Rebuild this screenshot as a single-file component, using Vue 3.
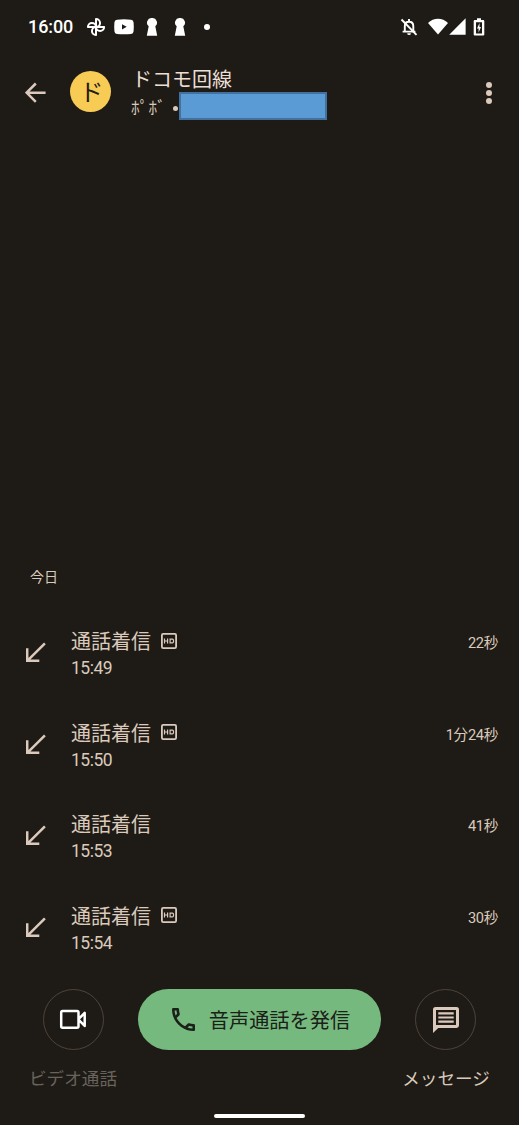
<script setup>
const calls = [
  { time: '15:49', duration: '22秒', hd: true },
  { time: '15:50', duration: '1分24秒', hd: true },
  { time: '15:53', duration: '41秒', hd: false },
  { time: '15:54', duration: '30秒', hd: true },
]
</script>

<template>
  <div class="screen">
    <div class="status">
      <span class="clock">16:00</span>
      <svg class="pinwheel" width="20" height="20" viewBox="0 0 20 20">
        <path d="M10 10V1.9A4 4 0 0 1 10 10H18.1A4 4 0 0 1 10 10V18.1A4 4 0 0 1 10 10H1.9A4 4 0 0 1 10 10Z" />
      </svg>
      <svg class="video-app" width="20" height="16" viewBox="0 0 20 16">
        <path d="M3 .7Q10 0 17 .7Q19.4.9 19.6 3.5Q20 8 19.6 12.2Q19.4 14.8 17 15Q10 15.7 3 15Q.6 14.8.4 12.2Q0 8 .4 3.5Q.6.9 3 .7ZM8 5.2v5.2l4.7-2.6z" fill-rule="evenodd" />
      </svg>
      <svg v-for="n in 2" :key="n" class="keyhole" width="12" height="18" viewBox="0 0 12 18">
        <path d="M6 0a4.7 4.7 0 0 1 3.3 8.3L11.2 17.7H.8L2.7 8.3A4.7 4.7 0 0 1 6 0Z" />
      </svg>
      <i class="more-dot"></i>
      <span class="grow"></span>
      <svg class="bell" width="18" height="18" viewBox="0 0 18 18">
        <g fill="none" stroke="currentColor" stroke-width="1.9">
          <path d="M4.8 13.2V8.2C4.8 5.4 6.5 3.7 9 3.7S13.3 5.4 13.3 8.2v5M2.6 13.6h12.8M9 1v3" />
          <path d="M1.5 1.5L16.5 16.8" />
        </g>
        <path d="M7.2 15.2h3.7a1.85 1.85 0 0 1-3.7 0Z" />
      </svg>
      <svg class="wifi" width="20" height="17" viewBox="0 0 20 17">
        <path d="M0 5C5.5-.8 14.5-.8 20 5L10 16.6Z" />
      </svg>
      <svg class="signal" width="17" height="17" viewBox="0 0 17 17"><path d="M16.6.2V16.7H.2Z" /></svg>
      <svg class="battery" width="12" height="18" viewBox="0 0 12 18">
        <path d="M4 .3h4v1.8h2.2q1.1 0 1.1 1.1v13.2q0 1.1-1.1 1.1H1.8q-1.1 0-1.1-1.1V3.2q0-1.1 1.1-1.1H4ZM3 4.2v11.2h6V4.2Z" fill-rule="evenodd" />
        <path d="M6.5 5L4 10.5h1.6v4L8 9H6.5Z" />
      </svg>
    </div>

    <header class="bar">
      <svg class="back" width="22" height="22" viewBox="0 0 22 22">
        <path d="M20.6 10.7H2.2M10.8 1.5L1.6 10.7l9.2 9.2" />
      </svg>
      <div class="avatar">ド</div>
      <div class="contact">
        <div class="name">ドコモ回線</div>
        <div class="number"><span class="carrier">ﾎﾟﾎﾞ</span><i class="bullet"></i><span class="mask"></span></div>
      </div>
      <div class="menu"><i></i><i></i><i></i></div>
    </header>

    <main class="history">
      <h2>今日</h2>
      <div v-for="call in calls" :key="call.time" class="call">
        <svg class="incoming" width="21" height="21" viewBox="0 0 21 21">
          <path d="M18.9 1.3L1.8 18.4M1.2 6.3V18.8H13.3" />
        </svg>
        <div class="detail">
          <div class="kind">
            <span>通話着信</span>
            <svg v-if="call.hd" width="16" height="16" viewBox="0 0 16 16">
              <rect x=".9" y=".9" width="14.2" height="14.2" rx="1.3" stroke-width="1.8" />
              <path d="M3.5 5.6v4.8M6.6 5.6v4.8M3.5 8h3.1M9.1 6.1h2.2q1.2 0 1.2 1.2v1.4q0 1.2-1.2 1.2H9.1Z" stroke-width="1.2" />
            </svg>
          </div>
          <div class="time">{{ call.time }}</div>
        </div>
        <div class="duration">{{ call.duration }}</div>
      </div>
    </main>

    <footer class="actions">
      <div class="action disabled">
        <span class="ring">
          <svg width="28" height="22" viewBox="0 0 28 22">
            <path class="line" d="M3.6 2H18Q19.5 2 19.5 3.5V17.3Q19.5 18.8 18 18.8H3.6Q2.2 18.8 2.2 17.3V3.5Q2.2 2 3.6 2ZM20 9.7L25.7 3.9V16.9L20 11.1" />
          </svg>
        </span>
        <span class="label">ビデオ通話</span>
      </div>
      <div class="voice">
        <svg width="23" height="23" viewBox="3 3 18 18">
          <path d="M6.54 5c.06.89.21 1.76.45 2.59l-1.2 1.2c-.41-1.2-.67-2.47-.76-3.79h1.51m9.86 12.02c.85.24 1.72.39 2.6.45v1.49c-1.32-.09-2.59-.35-3.8-.75l1.2-1.19M7.5 3H4c-.55 0-1 .45-1 1 0 9.39 7.61 17 17 17 .55 0 1-.45 1-1v-3.49c0-.55-.45-1-1-1-1.24 0-2.45-.2-3.57-.57-.1-.04-.21-.05-.31-.05-.26 0-.51.1-.71.29l-2.2 2.2c-2.83-1.45-5.15-3.76-6.59-6.59l2.2-2.2c.28-.28.36-.67.25-1.02C8.7 6.45 8.5 5.25 8.5 4c0-.55-.45-1-1-1z" />
        </svg>
        <span>音声通話を発信</span>
      </div>
      <div class="action">
        <span class="ring">
          <svg width="26" height="26" viewBox="0 0 26 26">
            <path d="M2.5 0H23.5Q26 0 26 2.5V18.6Q26 21 23.5 21H5.3L0 26V2.5Q0 0 2.5 0ZM3 3V18H23V3Z" fill-rule="evenodd" />
            <path d="M5.3 5.2h15.4v2.2H5.3ZM5.3 9.4h15.4v2.2H5.3ZM5.3 13.6h15.4v2.2H5.3Z" />
          </svg>
        </span>
        <span class="label">メッセージ</span>
      </div>
    </footer>
    <div class="home"></div>
  </div>
</template>

<style>
body { background: #1e1b16; }
</style>

<style scoped>
.screen {
  width: 519px;
  height: 1125px;
  display: flex;
  flex-direction: column;
  overflow: hidden;
  background: #1e1b16;
  color: #dbcabb;
  font-family: "Noto Sans CJK JP", sans-serif;
}
svg { display: block; flex: none; fill: currentColor; }
i { display: block; border-radius: 50%; background: currentColor; }

.status {
  height: 53px;
  box-sizing: border-box;
  display: flex;
  align-items: center;
  padding: 0 34px 0 28px;
  color: #fff;
}
.clock { width: 58px; font: 500 18px/24px Roboto, sans-serif; letter-spacing: -0.1px; }
.pinwheel { fill: none; stroke: currentColor; stroke-width: 2; stroke-linejoin: round; }
.video-app { margin-left: 8px; }
.keyhole { margin-left: 12px; }
.keyhole + .keyhole { margin-left: 16px; }
.more-dot { width: 6px; height: 6px; margin-left: 18px; }
.grow { flex: 1; }
.bell { margin-right: 10px; }
.signal { margin: 0 7px 0 1px; }

.bar { height: 83px; display: flex; align-items: flex-start; }
.back { margin: 29px 0 0 25px; fill: none; stroke: #dbc9bc; stroke-width: 2.5; }
.avatar {
  width: 41px;
  height: 41px;
  margin: 18px 0 0 23px;
  border-radius: 50%;
  background: #f8cb55;
  color: #211b12;
  font-size: 24px;
  line-height: 40px;
  text-align: center;
  text-indent: 2px;
}
.contact { margin: 14px 0 0 20px; flex: 1; }
.name { padding-left: 1px; font-size: 20px; line-height: 24px; color: #ebdfd4; }
.number { display: flex; align-items: flex-start; }
.carrier { width: 36px; line-height: 31px; font-size: 17.3px; letter-spacing: 0.3px; }
.bullet { width: 5px; height: 5px; margin: 15px 3px 0 6px; }
.mask { width: 148px; height: 28px; margin: 1px 0 0 -2px; box-sizing: border-box; border: 2px solid #41719c; background: #5b9bd5; }
.menu { display: flex; flex-direction: column; gap: 2px; margin: 28.5px 27.5px 0 0; }
.menu i { width: 6px; height: 6px; }

.history { margin-top: auto; }
h2 { margin: 0 0 33.3px 30px; font-size: 14px; line-height: 20px; font-weight: 400; }
.call { height: 91.6px; display: flex; padding: 0 21px 0 26px; }
.incoming { margin-top: 23px; fill: none; stroke: currentColor; stroke-width: 2.5; }
.detail { flex: 1; margin-left: 24px; padding-top: 8px; }
.kind { display: flex; align-items: center; gap: 10px; height: 27px; font-size: 20px; line-height: 27px; }
.kind svg { fill: none; stroke: currentColor; }
.time { margin-top: 2px; font: 17.5px/25px Roboto, sans-serif; letter-spacing: -0.5px; }
.duration { padding-top: 12px; font: 14.6px/24px Roboto, "Noto Sans CJK JP", sans-serif; letter-spacing: -0.3px; }

.actions {
  flex: none;
  height: 125px;
  margin-top: 3.6px;
  padding: 0 29.5px 0 29px;
  display: flex;
  justify-content: space-between;
  align-items: flex-start;
}
.action { width: 88px; display: flex; flex-direction: column; align-items: center; }
.ring {
  width: 61px;
  height: 61px;
  box-sizing: border-box;
  display: flex;
  align-items: center;
  justify-content: center;
  border: 1.5px solid #4d433a;
  border-radius: 50%;
}
.line { fill: none; stroke: #fff; stroke-width: 2.5; stroke-linejoin: round; }
.label { margin-top: 15px; font-size: 17.6px; line-height: 26px; white-space: nowrap; }
.action:last-child .label { padding-left: 1px; }
.disabled .label { color: #68635d; }
.voice {
  width: 243px;
  height: 61px;
  box-sizing: border-box;
  display: flex;
  align-items: center;
  padding-left: 34px;
  gap: 14px;
  border-radius: 31px;
  background: #76b97e;
  color: #1b2118;
  font-size: 20.2px;
  white-space: nowrap;
}
.voice span { margin-top: -1px; }
.home { width: 91px; height: 4px; margin: 0 auto 7px; flex: none; border-radius: 2px; background: #fff; }
</style>
